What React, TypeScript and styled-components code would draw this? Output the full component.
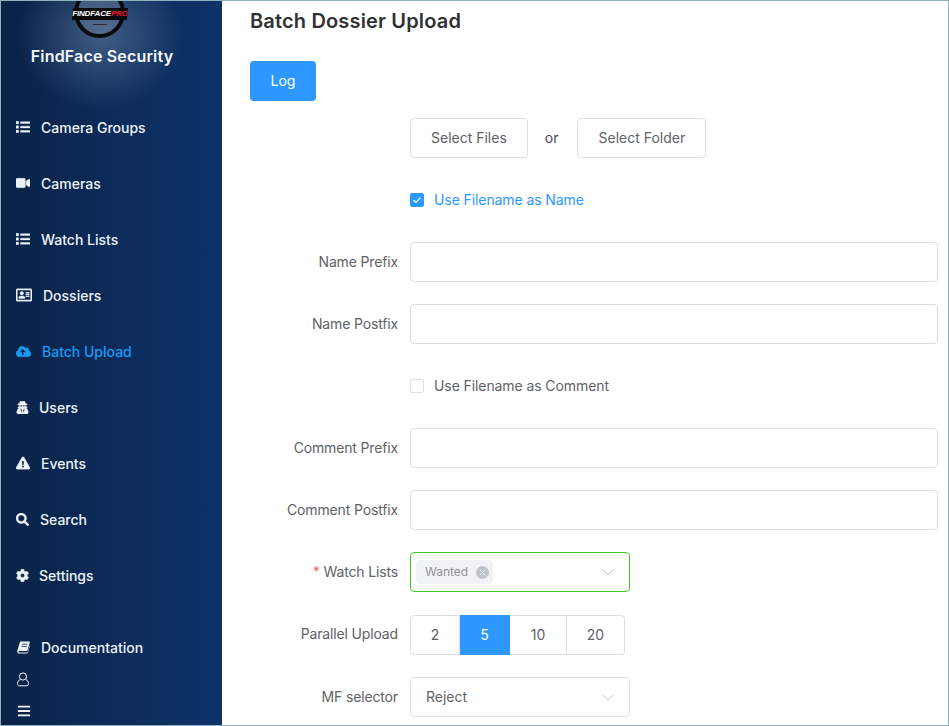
import React from "react";
import styled, { createGlobalStyle } from "styled-components";
import { FaList, FaVideo, FaRegAddressCard, FaCloudUploadAlt, FaUserSecret, FaExclamationTriangle, FaSearch, FaCog, FaBars } from "react-icons/fa";

const Global = createGlobalStyle`
  html, body { margin: 0; padding: 0; background: #fff; }
  body { font-family: Inter, "Liberation Sans", sans-serif; font-size: 14px; }
  * { box-sizing: border-box; }
`;

const Frame = styled.div`
  width: 949px; height: 726px; display: flex; overflow: hidden;
  border: 1px solid #8fb2c0; background: #fff;
`;
const Sidebar = styled.aside`
  width: 221px; flex: none; display: flex; flex-direction: column; color: #f2f5f9;
  background:
    radial-gradient(ellipse 82px 74px at 100px 34px, rgba(150,175,200,.38), rgba(150,175,200,0) 100%),
    linear-gradient(90deg, #0a2347 0%, #0c2c5c 55%, #0e3369 100%);
`;
const Brand = styled.div`
  height: 99px; flex: none; display: flex; flex-direction: column; align-items: center;
`;
const LogoMark = styled.div`
  position: relative; width: 100%; height: 37px; flex: none; overflow: hidden;
`;
const LogoRing = styled.div`
  position: absolute; left: 73px; top: -14px; width: 51px; height: 51px; border-radius: 50%;
  border: 4px solid #0b0b0d; background: rgba(120,140,165,.35);
`;
const LogoDash = styled.div`
  position: absolute; left: 92px; top: 23px; width: 14px; height: 1px; background: #2a2a2e;
`;
const LogoBand = styled.div`
  position: absolute; left: 71px; top: 7px; width: 56px; height: 12px; background: #0b0b0d;
  clip-path: polygon(2% 0, 100% 0, 98% 100%, 0 100%);
  font: italic 800 8px/12px "Liberation Sans", sans-serif; letter-spacing: -.15px; color: #fff; text-align: center; white-space: nowrap;
  em { color: #f0102c; font-style: italic; }
`;
const BrandName = styled.div`
  margin-top: 8px; margin-right: 19px; font-size: 16px; font-weight: 600; line-height: 20px; letter-spacing: .17px; color: #f4f6f9;
`;
const Nav = styled.nav`
  display: flex; flex-direction: column;
`;
const NavItem = styled.a<{ $active?: boolean; $gap: number }>`
  height: 56px; display: flex; align-items: center; padding: 0 0 2px 15px; gap: ${p => p.$gap}px;
  font-size: 14px; font-weight: 500; color: ${p => (p.$active ? "#1a9bf5" : "#eef2f7")};
  svg { flex: none; stroke-width: 14px; }
`;
const Foot = styled.div`
  margin-top: 28px; display: flex; flex-direction: column; color: #f2f5f9;
`;
const FootDoc = styled.a`
  height: 32px; display: flex; align-items: center; padding: 0 0 2px 16px; gap: 11px;
  font-size: 14px; font-weight: 500; color: #eef2f7;
`;
const FootIcon = styled.div`
  height: 31px; display: flex; align-items: center; padding-left: 16px;
`;

const Main = styled.main`
  flex: 1; min-width: 0; padding: 0 10px 0 28px; color: #606266;
`;
const Title = styled.h1`
  margin: 0; height: 60px; padding-top: 8px; font-size: 20px; line-height: 24px; font-weight: 600; letter-spacing: .16px; color: #303133;
`;
const LogButton = styled.button`
  display: block; width: 66px; height: 40px; border: 0; border-radius: 4px; background: #2d98ff; color: #fff;
  font: 400 14px Inter, sans-serif; padding: 0 0 1px;
`;
const Form = styled.form`
  margin-top: 17px; display: flex; flex-direction: column; gap: 22px;
`;
const Row = styled.div<{ $extra?: number }>`
  display: flex; align-items: center; height: 40px; margin-top: ${p => p.$extra ?? 0}px;
`;
const Label = styled.label<{ $lift?: boolean }>`
  width: 160px; flex: none; text-align: right; padding: 0 12px ${p => (p.$lift ? 4 : 2)}px 0; font-size: 14px; letter-spacing: -.15px; color: #606266; white-space: nowrap;
  i { color: #f56c6c; font-style: normal; margin-right: 4px; }
`;
const Field = styled.div`
  flex: 1; min-width: 0; display: flex; align-items: center;
`;
const PlainButton = styled.button`
  height: 40px; padding: 0 20px 1px; border: 1px solid #dcdfe6; border-radius: 4px; background: #fff; color: #606266;
  font: 400 14px Inter, sans-serif;
`;
const Or = styled.span`
  margin: 0 19px 2px 17px; color: #45474b; font-size: 14px;
`;
const CheckRow = styled.span<{ $on?: boolean }>`
  display: inline-flex; align-items: center; gap: 10px; color: ${p => (p.$on ? "#2d98ff" : "#606266")}; font-size: 14px; letter-spacing: -.09px;
`;
const CheckText = styled.span`
  padding-bottom: 2px;
`;
const CheckBox = styled.span<{ $on?: boolean }>`
  width: 14px; height: 14px; border-radius: 2px; display: inline-flex; align-items: center; justify-content: center;
  border: 1px solid ${p => (p.$on ? "#2d98ff" : "#dcdfe6")}; background: ${p => (p.$on ? "#2d98ff" : "#fff")};
`;
const TextInput = styled.input`
  width: 100%; height: 40px; border: 1px solid #dcdfe6; border-radius: 4px; background: #fff; outline: none; padding: 0 15px;
`;
const SelectBox = styled.div<{ $ok?: boolean }>`
  width: 220px; height: 40px; display: flex; align-items: center; border-radius: 4px;
  border: 1px solid ${p => (p.$ok ? "#3ec81f" : "#dcdfe6")}; padding: 0 15px 0 ${p => (p.$ok ? 5 : 15)}px; color: #606266; font-size: 14px;
  svg.chev { margin-left: auto; }
`;
const SelectValue = styled.span`
  padding-bottom: 2px;
`;
const Tag = styled.span`
  height: 24px; display: inline-flex; align-items: center; gap: 8px; padding: 0 4px 0 9px; border-radius: 4px;
  background: #f0f2f5; color: #909399; font-size: 12px;
`;
const TagText = styled.span`
  padding-bottom: 1px;
`;
const TagClose = styled.span`
  width: 13px; height: 13px; border-radius: 50%; background: #c0c4cc; display: inline-flex; align-items: center; justify-content: center;
`;
const Segments = styled.div`
  display: flex; height: 40px;
`;
const Segment = styled.div<{ $w: number; $on?: boolean; $pos?: "first" | "last" }>`
  width: ${p => p.$w}px; height: 40px; padding-bottom: 1px; display: flex; align-items: center; justify-content: center; font-size: 14px;
  border: 1px solid ${p => (p.$on ? "#2d98ff" : "#dcdfe6")}; border-left-width: ${p => (p.$pos === "first" ? 1 : 0)}px;
  background: ${p => (p.$on ? "#2d98ff" : "#fff")}; color: ${p => (p.$on ? "#fff" : "#606266")};
  border-radius: ${p => (p.$pos === "first" ? "4px 0 0 4px" : p.$pos === "last" ? "0 4px 4px 0" : "0")};
`;

const Chevron = () => (
  <svg className="chev" width="12" height="7" viewBox="0 0 12 7" fill="none" stroke="#c0c4cc" strokeWidth="1"><path d="M.7.7 6 6l5.3-5.3" /></svg>
);

const BookIcon = () => (
  <svg width="13" height="13" viewBox="0 0 13 13">
    <path fill="#f2f5f9" d="M3.8.4h8.6c.4 0 .6.3.5.7l-2.5 8.4c-.1.4-.4.6-.8.6H2.3c-.6 0-.9.4-.7.9.1.4.5.6.9.6H10c.3 0 .5-.1.6-.4L12.7 4l.3.5-2.1 7.3c-.2.5-.6.8-1.1.8H2.3C1.1 12.6.2 11.8.2 10.7c0-.2 0-.4.1-.6L2.9 1.2c.1-.5.5-.8.9-.8z" />
    <path stroke="#0b2a58" strokeWidth=".8" d="M5.1 3.2h5.4M4.4 5.4h5.4" />
  </svg>
);

const items = [
  { label: "Camera Groups", Icon: FaList, size: 14, gap: 11 },
  { label: "Cameras", Icon: FaVideo, size: 14, gap: 11 },
  { label: "Watch Lists", Icon: FaList, size: 14, gap: 11 },
  { label: "Dossiers", Icon: FaRegAddressCard, size: 16, gap: 11 },
  { label: "Batch Upload", Icon: FaCloudUploadAlt, size: 15, gap: 11 },
  { label: "Users", Icon: FaUserSecret, size: 13, gap: 10 },
  { label: "Events", Icon: FaExclamationTriangle, size: 14, gap: 11 },
  { label: "Search", Icon: FaSearch, size: 13, gap: 11 },
  { label: "Settings", Icon: FaCog, size: 13, gap: 10 },
];

export default function App() {
  return (
    <Frame>
      <Global />
      <Sidebar>
        <Brand>
          <LogoMark>
            <LogoRing />
            <LogoDash />
            <LogoBand>FINDFACE<em>PRO</em></LogoBand>
          </LogoMark>
          <BrandName>FindFace Security</BrandName>
        </Brand>
        <Nav>
          {items.map(({ label, Icon, size, gap }) => (
            <NavItem key={label} $active={label === "Batch Upload"} $gap={gap}>
              <Icon size={size} />
              {label}
            </NavItem>
          ))}
        </Nav>
        <Foot>
          <FootDoc><BookIcon />Documentation</FootDoc>
          <FootIcon>
            <svg width="12" height="15" viewBox="0 0 12 15" fill="none" stroke="#f2f5f9" strokeWidth="1">
              <circle cx="6" cy="4.5" r="3.6" />
              <path d="M3.4 7.4C1.6 8.2.6 9.6.6 11.5v.8c0 .9.6 1.5 1.5 1.5h7.8c.9 0 1.5-.6 1.5-1.5v-.8c0-1.9-1-3.3-2.8-4.1" />
            </svg>
          </FootIcon>
          <FootIcon><FaBars size={14} /></FootIcon>
        </Foot>
      </Sidebar>
      <Main>
        <Title>Batch Dossier Upload</Title>
        <LogButton type="button">Log</LogButton>
        <Form>
          <Row>
            <Label />
            <Field>
              <PlainButton type="button">Select Files</PlainButton>
              <Or>or</Or>
              <PlainButton type="button">Select Folder</PlainButton>
            </Field>
          </Row>
          <Row>
            <Label />
            <Field>
              <CheckRow $on>
                <CheckBox $on>
                  <svg width="10" height="8" viewBox="0 0 10 8" fill="none" stroke="#fff" strokeWidth="1.2"><path d="M1.5 4 4 6.3 8.5 1.6" /></svg>
                </CheckBox>
                <CheckText>Use Filename as Name</CheckText>
              </CheckRow>
            </Field>
          </Row>
          <Row><Label>Name Prefix</Label><Field><TextInput /></Field></Row>
          <Row><Label>Name Postfix</Label><Field><TextInput /></Field></Row>
          <Row>
            <Label />
            <Field><CheckRow><CheckBox /><CheckText>Use Filename as Comment</CheckText></CheckRow></Field>
          </Row>
          <Row><Label>Comment Prefix</Label><Field><TextInput /></Field></Row>
          <Row><Label>Comment Postfix</Label><Field><TextInput /></Field></Row>
          <Row>
            <Label><i>*</i>Watch Lists</Label>
            <Field>
              <SelectBox $ok>
                <Tag>
                  <TagText>Wanted</TagText>
                  <TagClose>
                    <svg width="7" height="7" viewBox="0 0 7 7" stroke="#f0f2f5" strokeWidth="1"><path d="M1 1l5 5M6 1 1 6" /></svg>
                  </TagClose>
                </Tag>
                <Chevron />
              </SelectBox>
            </Field>
          </Row>
          <Row $extra={1}>
            <Label $lift>Parallel Upload</Label>
            <Field>
              <Segments>
                <Segment $w={50} $pos="first">2</Segment>
                <Segment $w={50} $on>5</Segment>
                <Segment $w={57}>10</Segment>
                <Segment $w={58} $pos="last">20</Segment>
              </Segments>
            </Field>
          </Row>
          <Row>
            <Label>MF selector</Label>
            <Field>
              <SelectBox><SelectValue>Reject</SelectValue><Chevron /></SelectBox>
            </Field>
          </Row>
        </Form>
      </Main>
    </Frame>
  );
}
